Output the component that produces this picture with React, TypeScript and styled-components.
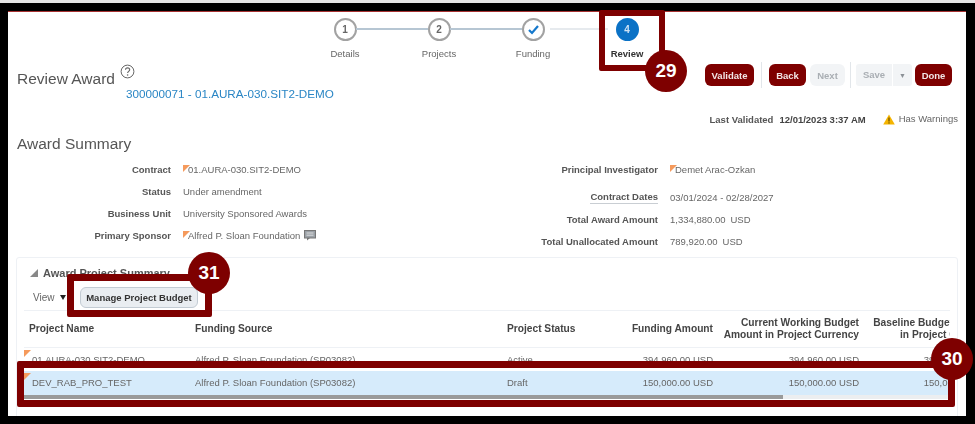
import React from 'react';
import styled, { createGlobalStyle } from 'styled-components';

const GlobalStyle = createGlobalStyle`
  html, body {
    margin: 0;
    padding: 0;
    background: #e6e6e6;
  }
  body {
    font-family: "Liberation Sans", Arial, sans-serif;
    overflow: hidden;
  }
`;

const MAROON = '#7e0000';

const Screen = styled.div`
  position: relative;
  width: 975px;
  height: 424px;
  padding-top: 3px;
  box-sizing: border-box;
  overflow: hidden;
`;

const Frame = styled.div`
  height: 421px;
  box-sizing: border-box;
  border: solid #000;
  border-width: 8px 9px 8px 8px;
  filter: blur(0.45px);
`;

const Inner = styled.div`
  height: 100%;
  box-sizing: border-box;
  background: #fff;
  border-top: 1px solid #a83232;
  overflow: hidden;
  color: #555;
`;

const Stepper = styled.div`
  display: flex;
  margin: 6px 0 0 290px;
  height: 46px;
`;

const Step = styled.div`
  position: relative;
  width: 94px;
  display: flex;
  flex-direction: column;
  align-items: center;
  gap: 7px;
`;

const Connector = styled.span<{ $faded?: boolean }>`
  position: absolute;
  top: 10px;
  height: 2px;
  left: ${p => (p.$faded ? '64px' : '58px')};
  width: ${p => (p.$faded ? '58px' : '72px')};
  background: ${p => (p.$faded ? '#e6eaee' : '#b6c6d3')};
`;

const StepCircle = styled.div<{ $active?: boolean }>`
  width: 23px;
  height: 23px;
  box-sizing: border-box;
  border-radius: 50%;
  border: 2px solid ${p => (p.$active ? '#0b72c6' : '#a2a2a2')};
  background: ${p => (p.$active ? '#0b72c6' : '#fff')};
  color: ${p => (p.$active ? '#cfe3f5' : '#666')};
  font-size: 10px;
  font-weight: 700;
  display: flex;
  align-items: center;
  justify-content: center;
`;

const StepLabel = styled.div<{ $active?: boolean }>`
  font-size: 9.5px;
  line-height: 12px;
  color: ${p => (p.$active ? '#333' : '#666')};
  font-weight: ${p => (p.$active ? 700 : 400)};
`;

const HeaderRow = styled.div`
  display: flex;
  justify-content: space-between;
  padding-left: 9px;
  padding-right: 14px;
`;

const TitleBlock = styled.div`
  padding-top: 6px;
`;

const TitleLine = styled.div`
  display: flex;
  align-items: flex-start;
  gap: 5px;
`;

const PageTitle = styled.h1`
  margin: 0;
  font-size: 15.5px;
  line-height: 17px;
  font-weight: 400;
  color: #555;
`;

const HelpIcon = styled.svg`
  width: 15px;
  height: 15px;
  margin-top: -6px;
`;

const AwardLink = styled.a`
  display: block;
  margin-left: 109px;
  font-size: 11.7px;
  line-height: 14px;
  color: #2a86c5;
`;

const Actions = styled.div`
  display: flex;
  align-items: flex-start;
`;

const ActionButton = styled.div<{ $disabled?: boolean; $w: number; $gap?: number }>`
  width: ${p => p.$w}px;
  height: 22px;
  margin-left: ${p => p.$gap ?? 0}px;
  box-sizing: border-box;
  border-radius: 6px;
  display: flex;
  align-items: center;
  justify-content: center;
  font-size: 9.5px;
  font-weight: 700;
  background: ${p => (p.$disabled ? '#f2f4f6' : MAROON)};
  color: ${p => (p.$disabled ? '#a9aeb3' : '#f2e6e6')};
`;

const ActionDivider = styled.div<{ $gap: number }>`
  width: 1px;
  height: 26px;
  margin: -2px ${p => p.$gap}px 0;
  background: #e2e6ea;
`;

const SaveGroup = styled.div`
  display: flex;
  margin-right: 3px;
  border-radius: 3px;
  background: #f2f4f6;
  height: 22px;
  width: 56px;
  font-size: 9.5px;
  font-weight: 700;
  color: #a9aeb3;
  align-items: center;
`;

const SaveText = styled.span`
  flex: 1;
  text-align: center;
  border-right: 1px solid #fff;
  line-height: 22px;
`;

const SaveArrow = styled.span`
  width: 19px;
  font-size: 7px;
  text-align: center;
  color: #8b9096;
`;

const ValidatedRow = styled.div`
  display: flex;
  justify-content: flex-end;
  align-items: center;
  height: 14px;
  margin-top: 11px;
  padding-right: 8px;
  font-size: 9.5px;
  color: #444;
`;

const ValidatedLabel = styled.span`
  font-weight: 700;
  color: #555;
  margin-right: 6px;
`;

const ValidatedDate = styled.span`
  font-weight: 700;
  margin-right: 17px;
`;

const WarningText = styled.span`
  margin-left: 4px;
  margin-top: -2px;
  color: #666;
`;

const SectionHeading = styled.h2`
  margin: 8px 0 0 9px;
  font-size: 15.5px;
  line-height: 20px;
  font-weight: 400;
  color: #555;
`;

const SummaryGrid = styled.div`
  display: grid;
  grid-template-columns: 487px 1fr;
  margin-top: 4px;
`;

const SummaryColumn = styled.div``;

const SummaryRow = styled.div<{ $after?: number }>`
  display: grid;
  grid-template-columns: 163px 1fr;
  column-gap: 12px;
  align-items: center;
  height: 22px;
  margin-bottom: ${p => p.$after ?? 0}px;
  font-size: 9.5px;
`;

const SummaryLabel = styled.div<{ $underline?: boolean }>`
  justify-self: end;
  font-weight: 700;
  color: #555;
  ${p => p.$underline && 'border-bottom: 1px solid #c9ced3; line-height: 12px;'}
`;

const SummaryValue = styled.div<{ $flag?: boolean }>`
  position: relative;
  display: flex;
  align-items: center;
  color: #666;
  padding-left: ${p => (p.$flag ? 5 : 0)}px;
  ${p =>
    p.$flag &&
    `&::before {
      content: '';
      position: absolute;
      left: 0;
      top: 1px;
      border-style: solid;
      border-width: 7px 7px 0 0;
      border-color: #f59a5c transparent transparent transparent;
    }`}
`;

const Amount = styled.span`
  margin-left: 5px;
`;

const CommentIcon = styled.svg`
  width: 12px;
  height: 11px;
  margin-left: 4px;
`;

const Panel = styled.div`
  margin: 5px 8px 0;
  height: 170px;
  box-sizing: border-box;
  border: 1px solid #eef1f5;
  border-radius: 3px;
  padding: 7px 7px 0;
`;

const PanelTitle = styled.div`
  display: flex;
  align-items: center;
  gap: 5px;
  height: 16px;
  padding-left: 6px;
  font-size: 11px;
  font-weight: 700;
  color: #555;
`;

const Toolbar = styled.div`
  display: flex;
  align-items: center;
  margin-top: 6px;
  padding: 0 0 2px 9px;
  border-bottom: 1px solid #eef1f5;
  font-size: 10px;
  color: #666;
`;

const ViewMenu = styled.span`
  display: flex;
  align-items: center;
  gap: 5px;
  width: 47px;
`;

const ViewArrow = styled.span`
  border-style: solid;
  border-width: 5px 3.5px 0;
  border-color: #222 transparent transparent;
`;

const ManageButton = styled.div`
  width: 118px;
  height: 21px;
  box-sizing: border-box;
  display: flex;
  align-items: center;
  justify-content: center;
  background: #e9edf1;
  border: 1px solid #c3ccd4;
  border-radius: 6px;
  color: #333;
  font-size: 9.5px;
  font-weight: 700;
`;

const TableClip = styled.div`
  overflow: hidden;
`;

const TableRow = styled.div<{ $header?: boolean; $selected?: boolean }>`
  display: grid;
  grid-template-columns: 171px 312px 100px 106px 146px 135px;
  width: 970px;
  align-items: center;
  box-sizing: border-box;
  height: ${p => (p.$header ? '37px' : p.$selected ? '24px' : '23px')};
  font-size: ${p => (p.$header ? '10.2px' : '9.5px')};
  background: ${p => (p.$selected ? '#d6ebfb' : '#fff')};
  border-bottom: ${p => (p.$header ? '1px solid #eef1f5' : 'none')};
  color: ${p => (p.$header ? '#444' : '#666')};
  font-weight: ${p => (p.$header ? 700 : 400)};
`;

const Cell = styled.div<{ $right?: boolean; $flag?: boolean; $lead?: boolean }>`
  position: relative;
  line-height: 12px;
  text-align: ${p => (p.$right ? 'right' : 'left')};
  padding-left: ${p => (p.$flag ? '8px' : p.$lead ? '5px' : '0')};
  ${p =>
    p.$flag &&
    `&::before {
      content: '';
      position: absolute;
      left: 0;
      top: -4px;
      border-style: solid;
      border-width: 7px 7px 0 0;
      border-color: #f59a5c transparent transparent transparent;
    }`}
`;

const ScrollTrack = styled.div`
  height: 4px;
  background: #eceef0;
`;

const ScrollThumb = styled.div`
  width: 82%;
  height: 100%;
  background: #9a9a9a;
`;

// callouts lie over the page
const CalloutBox = styled.div<{ $x: number; $y: number; $w: number; $h: number; $b: number }>`
  position: absolute;
  left: ${p => p.$x}px;
  top: ${p => p.$y}px;
  width: ${p => p.$w}px;
  height: ${p => p.$h}px;
  box-sizing: border-box;
  border: ${p => p.$b}px solid ${MAROON};
  border-radius: 2px;
`;

const CalloutBadge = styled.div<{ $x: number; $y: number }>`
  position: absolute;
  left: ${p => p.$x - 21}px;
  top: ${p => p.$y - 21}px;
  width: 42px;
  height: 42px;
  border-radius: 50%;
  background: ${MAROON};
  color: #fff;
  font-size: 19px;
  font-weight: 700;
  display: flex;
  align-items: center;
  justify-content: center;
`;

const steps = [
  { label: 'Details', value: '1' },
  { label: 'Projects', value: '2' },
  { label: 'Funding', value: 'check' },
  { label: 'Review', value: '4', active: true },
];

const projects = [
  {
    name: '01.AURA-030.SIT2-DEMO',
    status: 'Active',
    funding: '394,960.00',
    working: '394,960.00',
    baseline: '394,960.00',
  },
  {
    name: 'DEV_RAB_PRO_TEST',
    status: 'Draft',
    funding: '150,000.00',
    working: '150,000.00',
    baseline: '150,000.00',
    selected: true,
  },
];

const App: React.FC = () => (
  <Screen>
    <GlobalStyle />
    <Frame>
      <Inner>
        <Stepper>
          {steps.map((step, i) => (
            <Step key={step.label}>
              {i < 2 && <Connector />}
              {i === 2 && <Connector $faded />}
              <StepCircle $active={step.active}>
                {step.value === 'check' ? (
                  <svg width="13" height="11" viewBox="0 0 13 11">
                    <path d="M2 6l3 3 6-7" fill="none" stroke="#1478cc" strokeWidth="2.2" />
                  </svg>
                ) : (
                  step.value
                )}
              </StepCircle>
              <StepLabel $active={step.active}>{step.label}</StepLabel>
            </Step>
          ))}
        </Stepper>

        <HeaderRow>
          <TitleBlock>
            <TitleLine>
              <PageTitle>Review Award</PageTitle>
              <HelpIcon viewBox="0 0 15 15">
                <circle cx="7.5" cy="7.5" r="6.4" fill="none" stroke="#666" strokeWidth="1" />
                <path d="M5.5 5.8c0-2.6 4.2-2.6 4.2 0 0 1.6-2.1 1.6-2.1 3.3" fill="none" stroke="#666" strokeWidth="1.1" />
                <circle cx="7.6" cy="11" r="0.8" fill="#666" />
              </HelpIcon>
            </TitleLine>
            <AwardLink>300000071 - 01.AURA-030.SIT2-DEMO</AwardLink>
          </TitleBlock>
          <Actions>
            <ActionButton $w={49}>Validate</ActionButton>
            <ActionDivider $gap={7} />
            <ActionButton $w={37}>Back</ActionButton>
            <ActionButton $w={35} $gap={4} $disabled>Next</ActionButton>
            <ActionDivider $gap={5} />
            <SaveGroup>
              <SaveText>Save</SaveText>
              <SaveArrow>▼</SaveArrow>
            </SaveGroup>
            <ActionButton $w={37}>Done</ActionButton>
          </Actions>
        </HeaderRow>

        <ValidatedRow>
          <ValidatedLabel>Last Validated</ValidatedLabel>
          <ValidatedDate>12/01/2023 3:37 AM</ValidatedDate>
          <svg width="12" height="11" viewBox="0 0 12 11">
            <path d="M6 0.5L11.8 10.5H0.2Z" fill="#f4b400" />
            <path d="M6 3.6V7.4" stroke="#5a4300" strokeWidth="1.1" />
            <circle cx="6" cy="8.9" r="0.7" fill="#5a4300" />
          </svg>
          <WarningText>Has Warnings</WarningText>
        </ValidatedRow>

        <SectionHeading>Award Summary</SectionHeading>

        <SummaryGrid>
          <SummaryColumn>
            <SummaryRow>
              <SummaryLabel>Contract</SummaryLabel>
              <SummaryValue $flag>01.AURA-030.SIT2-DEMO</SummaryValue>
            </SummaryRow>
            <SummaryRow>
              <SummaryLabel>Status</SummaryLabel>
              <SummaryValue>Under amendment</SummaryValue>
            </SummaryRow>
            <SummaryRow>
              <SummaryLabel>Business Unit</SummaryLabel>
              <SummaryValue>University Sponsored Awards</SummaryValue>
            </SummaryRow>
            <SummaryRow>
              <SummaryLabel>Primary Sponsor</SummaryLabel>
              <SummaryValue $flag>
                Alfred P. Sloan Foundation
                <CommentIcon viewBox="0 0 12 11">
                  <rect x="0.5" y="0.5" width="11" height="7.5" fill="#9aa0a6" stroke="#777" />
                  <path d="M3 8v2.5L6 8z" fill="#777" />
                  <path d="M2.5 3h7M2.5 5.2h7" stroke="#eee" strokeWidth="0.8" />
                </CommentIcon>
              </SummaryValue>
            </SummaryRow>
          </SummaryColumn>
          <SummaryColumn>
            <SummaryRow $after={6}>
              <SummaryLabel>Principal Investigator</SummaryLabel>
              <SummaryValue $flag>Demet Arac-Ozkan</SummaryValue>
            </SummaryRow>
            <SummaryRow>
              <SummaryLabel $underline>Contract Dates</SummaryLabel>
              <SummaryValue>03/01/2024 - 02/28/2027</SummaryValue>
            </SummaryRow>
            <SummaryRow>
              <SummaryLabel>Total Award Amount</SummaryLabel>
              <SummaryValue>1,334,880.00<Amount>USD</Amount></SummaryValue>
            </SummaryRow>
            <SummaryRow>
              <SummaryLabel>Total Unallocated Amount</SummaryLabel>
              <SummaryValue>789,920.00<Amount>USD</Amount></SummaryValue>
            </SummaryRow>
          </SummaryColumn>
        </SummaryGrid>

        <Panel>
          <PanelTitle>
            <svg width="8" height="8" viewBox="0 0 8 8">
              <path d="M8 0V8H0Z" fill="#888" />
            </svg>
            Award Project Summary
          </PanelTitle>
          <Toolbar>
            <ViewMenu>View <ViewArrow /></ViewMenu>
            <ManageButton>Manage Project Budget</ManageButton>
          </Toolbar>
          <TableClip>
            <TableRow $header>
              <Cell $lead>Project Name</Cell>
              <Cell>Funding Source</Cell>
              <Cell>Project Status</Cell>
              <Cell $right>Funding Amount</Cell>
              <Cell $right>Current Working Budget<br />Amount in Project Currency</Cell>
              <Cell $right>Baseline Budget Amount<br />in Project Currency</Cell>
            </TableRow>
            {projects.map(project => (
              <TableRow key={project.name} $selected={project.selected}>
                <Cell $flag>{project.name}</Cell>
                <Cell>Alfred P. Sloan Foundation (SP03082)</Cell>
                <Cell>{project.status}</Cell>
                <Cell $right>{project.funding} USD</Cell>
                <Cell $right>{project.working} USD</Cell>
                <Cell $right>{project.baseline} USD</Cell>
              </TableRow>
            ))}
            <ScrollTrack>
              <ScrollThumb />
            </ScrollTrack>
          </TableClip>
        </Panel>
      </Inner>
    </Frame>

    <CalloutBox $x={599} $y={10} $w={66} $h={61} $b={6} />
    <CalloutBadge $x={666} $y={71}>29</CalloutBadge>
    <CalloutBox $x={67} $y={274} $w={145} $h={43} $b={7} />
    <CalloutBadge $x={209} $y={273}>31</CalloutBadge>
    <CalloutBox $x={17} $y={361} $w={938} $h={46} $b={7} />
    <CalloutBadge $x={952} $y={359}>30</CalloutBadge>
  </Screen>
);

export default App;
